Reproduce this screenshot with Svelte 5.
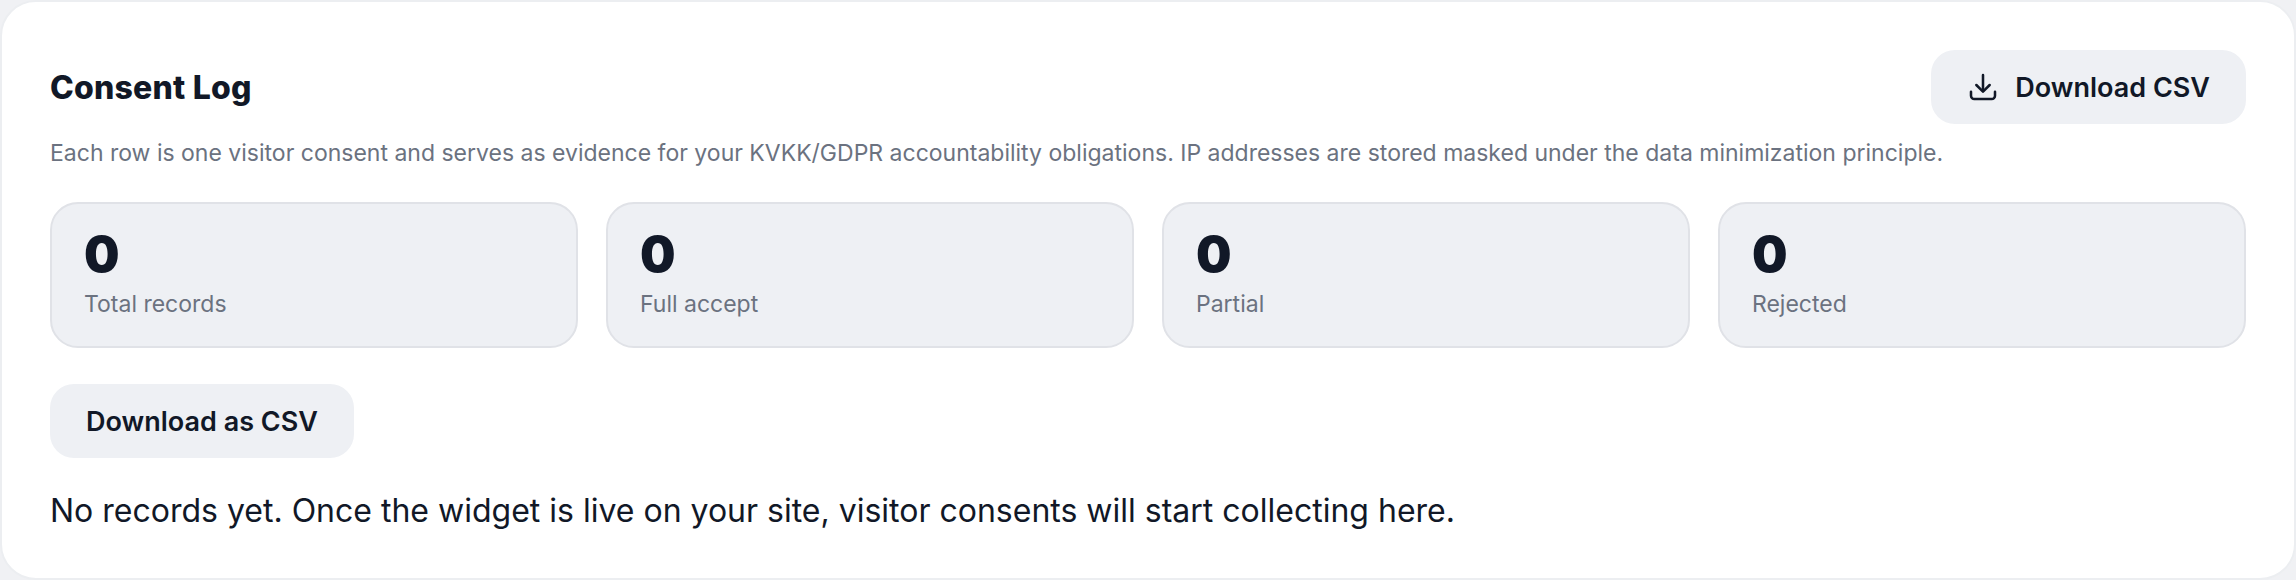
<script>
  const stats = [
    { value: 0, label: 'Total records' },
    { value: 0, label: 'Full accept' },
    { value: 0, label: 'Partial' },
    { value: 0, label: 'Rejected' }
  ];
</script>

<div class="panel">
  <div class="head">
    <h2>Consent Log</h2>
    <button class="btn">
      <svg width="32" height="32" viewBox="0 0 24 24" fill="none" stroke="currentColor" stroke-width="1.9" stroke-linecap="round" stroke-linejoin="round">
        <path d="M12 3v12" />
        <path d="M7 10.500l5 5 5-5" />
        <path d="M3 15.500v3a2.500 2.500 0 0 0 2.500 2.500h13a2.500 2.500 0 0 0 2.500-2.500v-3" />
      </svg>
      Download CSV
    </button>
  </div>
  <p class="desc">Each row is one visitor consent and serves as evidence for your KVKK/GDPR accountability obligations. IP addresses are stored masked under the data minimization principle.</p>
  <div class="stats">
    {#each stats as s}
      <div class="stat">
        <div class="num">{s.value}</div>
        <div class="label">{s.label}</div>
      </div>
    {/each}
  </div>
  <button class="btn plain">Download as CSV</button>
  <p class="empty">No records yet. Once the widget is live on your site, visitor consents will start collecting here.</p>
</div>

<style>
  :global(body) {
    background: #f0f1f4;
    font-family: Inter, "Liberation Sans", sans-serif;
  }

  .panel {
    box-sizing: border-box;
    width: 2296px;
    height: 580px;
    background: #fff;
    border: 2px solid #eceef1;
    border-radius: 36px;
    padding: 48px;
    color: #111827;
  }

  .head {
    display: flex;
    justify-content: space-between;
    align-items: center;
  }

  h2 {
    margin: 0;
    font-size: 32px;
    font-weight: 800;
    letter-spacing: 0.2px;
  }

  .btn {
    display: flex;
    align-items: center;
    gap: 16px;
    height: 74px;
    padding: 0 36px;
    border: none;
    border-radius: 24px;
    background: #eef0f4;
    color: #111827;
    font-family: inherit;
    font-size: 27px;
    font-weight: 600;
  }

  .desc {
    margin: 12px 0 0;
    font-size: 23px;
    line-height: 34px;
    color: #6b7280;
  }

  .stats {
    display: grid;
    grid-template-columns: repeat(4, 1fr);
    gap: 28px;
    margin-top: 32px;
  }

  .stat {
    box-sizing: border-box;
    height: 146px;
    padding: 22px 32px;
    background: #eef0f4;
    border: 2px solid #e0e2e7;
    border-radius: 28px;
  }

  .num {
    font-size: 50px;
    font-weight: 900;
    line-height: 56px;
  }

  .label {
    margin-top: 5px;
    font-size: 23px;
    line-height: 34px;
    color: #6b7280;
  }

  .plain {
    margin-top: 36px;
  }

  .empty {
    margin: 29px 0 0;
    font-size: 32px;
    line-height: 48px;
  }
</style>
